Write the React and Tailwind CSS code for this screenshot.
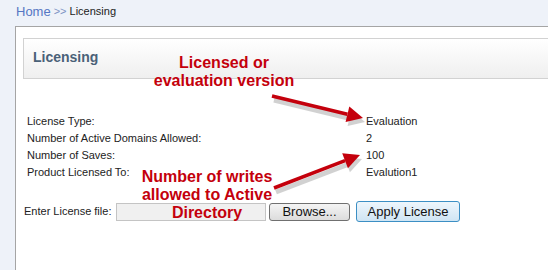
const rows = [
  ['License Type:', 'Evaluation'],
  ['Number of Active Domains Allowed:', '2'],
  ['Number of Saves:', '100'],
  ['Product Licensed To:', 'Evalution1'],
];

function Arrow({ x1, y1, x2, y2 }) {
  const ang = Math.atan2(y2 - y1, x2 - x1);
  const len = 16;
  const w = 8;
  const bx = x2 - len * Math.cos(ang);
  const by = y2 - len * Math.sin(ang);
  const px = -Math.sin(ang) * w;
  const py = Math.cos(ang) * w;
  const head = `${x2},${y2} ${bx + px},${by + py} ${bx - px},${by - py}`;
  const headS = `${x2 + 2},${y2 + 4} ${bx + px + 2},${by + py + 4} ${bx - px + 2},${by - py + 4}`;
  return (
    <g>
      <line x1={x1 + 2} y1={y1 + 4} x2={bx + 2} y2={by + 4} stroke="#9a9a9a" strokeOpacity="0.45" strokeWidth="5" />
      <polygon points={headS} fill="#9a9a9a" fillOpacity="0.45" />
      <line x1={x1} y1={y1} x2={bx} y2={by} stroke="#c4000c" strokeWidth="3.5" />
      <polygon points={head} fill="#c4000c" />
    </g>
  );
}

export default function App() {
  return (
    <div
      className="relative w-[548px] h-[270px] overflow-hidden bg-[#eef2f9] text-[11px] text-[#222]"
      style={{ fontFamily: '"Liberation Sans", Arial, sans-serif' }}
    >
      {/* breadcrumb */}
      <div className="h-[26px] pl-[16px] pb-[3px] flex items-center gap-[3px] leading-none">
        <span className="text-[13px] text-[#5677c4]">Home</span>
        <span className="text-[11px] text-[#7d93c4]">&gt;&gt;</span>
        <span className="text-[11px] text-[#222]">Licensing</span>
      </div>

      {/* main panel */}
      <div className="ml-[15px] h-[244px] bg-white border-l border-t border-[#a5a5a5] pl-[7px] pt-[11px]">
        <div className="h-[41px] border border-r-0 border-[#d2d2d2] bg-gradient-to-b from-white to-[#efefef] flex items-center pl-[9px]">
          <span className="text-[14px] font-bold text-[#4a6178] pb-[2px]">Licensing</span>
        </div>

        <div className="pl-[4px] pt-[34px] grid grid-cols-[339px_1fr] leading-[17px]">
          {rows.map(([k, v]) => (
            <div key={k} className="contents">
              <span>{k}</span>
              <span>{v}</span>
            </div>
          ))}
        </div>

        <div className="pl-[1px] pt-[20px] flex items-center">
          <span className="w-[92px]">Enter License file:</span>
          <div className="w-[150px] h-[18px] bg-[#f0f0f0] border border-[#c4c4c4]" />
          <button className="ml-[3px] w-[81px] h-[18px] border border-[#707070] rounded-[3px] bg-gradient-to-b from-[#f4f4f4] to-[#dcdcdc] text-[13px] leading-none text-[#111]">
            Browse...
          </button>
          <button className="ml-[6px] w-[104px] h-[21px] border border-[#3c8fc4] rounded-[3px] bg-gradient-to-b from-[#eef6fc] to-[#cfe5f4] text-[13px] leading-none text-[#111]">
            Apply License
          </button>
        </div>
      </div>

      {/* annotations */}
      <div className="absolute left-[134px] top-[54px] w-[180px] text-center text-[16px] font-bold leading-[18px] text-[#c4000c]">
        Licensed or
        <br />
        evaluation version
      </div>
      <div className="absolute left-[117px] top-[168px] w-[180px] text-center text-[16px] font-bold leading-[18px] text-[#c4000c]">
        Number of writes
        <br />
        allowed to Active
        <br />
        Directory
      </div>
      <svg className="absolute left-0 top-0" width="548" height="270">
        <Arrow x1={272} y1={96} x2={363} y2={118} />
        <Arrow x1={274} y1={188} x2={360} y2={155} />
      </svg>
    </div>
  );
}
